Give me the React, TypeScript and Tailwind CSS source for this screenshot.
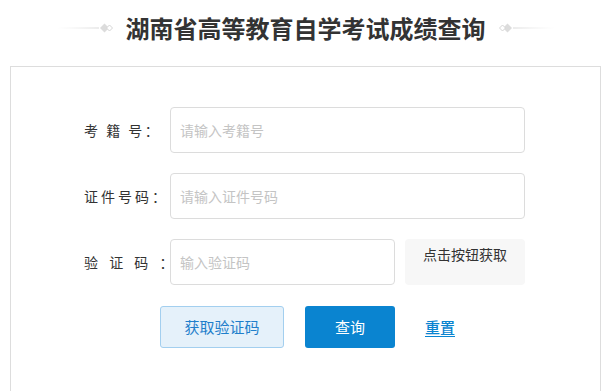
import React from "react";

const font = { fontFamily: '"Noto Sans CJK SC", "Noto Sans", "Liberation Sans", sans-serif' };

function Ornament({ flip }: { flip?: boolean }) {
  return (
    <svg width="56" height="14" viewBox="0 0 56 14" className={flip ? "-scale-x-100" : ""}>
      <defs>
        <linearGradient id={flip ? "lnR" : "lnL"} x1="0" x2="1" y1="0" y2="0">
          <stop offset="0" stopColor="#e4e4e4" stopOpacity="0" />
          <stop offset="1" stopColor="#d8d8d8" />
        </linearGradient>
      </defs>
      <rect x="0" y="6.5" width="42" height="1" fill={`url(#${flip ? "lnR" : "lnL"})`} />
      <polygon points="43,7 47.5,2.5 52,7 47.5,11.5" fill="#dcdcdc" />
      <polygon points="49.5,7 52.5,4 55.5,7 52.5,10" fill="#fff" stroke="#d4d4d4" strokeWidth="1" />
    </svg>
  );
}

function Field({ label, tracking, placeholder }: { label: string; tracking: string; placeholder: string }) {
  return (
    <div className="flex items-center">
      <label className={`w-[86px] shrink-0 whitespace-pre text-[14px] text-[#333] ${tracking}`}>{label}</label>
      <input
        placeholder={placeholder}
        className="h-[46px] w-[355px] rounded-[4px] border border-[#dcdcdc] bg-white px-[9px] text-[14px] text-[#333] outline-none placeholder:text-[#c4c4c4]"
      />
    </div>
  );
}

export default function App() {
  return (
    <div className="min-h-[391px] bg-white" style={font}>
      <div className="flex h-[44px] items-center justify-center gap-[13px] pt-[12px]">
        <Ornament />
        <h1 className="text-[24px] leading-[32px] font-bold text-[#333]">湖南省高等教育自学考试成绩查询</h1>
        <Ornament flip />
      </div>

      <div className="mx-[10px] mt-[22px] h-[340px] border border-[#dddddd] bg-white pt-[40px] pl-[73px]">
        <div className="flex flex-col gap-[20px]">
          <Field label="考 籍 号：" tracking="tracking-[2.5px]" placeholder="请输入考籍号" />
          <Field label="证件号码：" tracking="tracking-[3px]" placeholder="请输入证件号码" />
          <div className="flex items-center">
            <label className="w-[86px] shrink-0 whitespace-pre text-[14px] text-[#333] tracking-[4px]">验 证 码 ：</label>
            <input
              placeholder="输入验证码"
              className="h-[46px] w-[225px] rounded-[4px] border border-[#dcdcdc] bg-white px-[9px] text-[14px] text-[#333] outline-none placeholder:text-[#c4c4c4]"
            />
            <button className="ml-[10px] flex h-[46px] w-[120px] items-start justify-center rounded-[4px] bg-[#f7f7f7] pt-[5px] text-[14px] text-[#333]">
              点击按钮获取
            </button>
          </div>
        </div>

        <div className="mt-[21px] ml-[76px] flex items-center">
          <button className="h-[42px] w-[124px] rounded-[3px] border border-[#a3cfef] bg-[#e5f1fa] text-[15px] text-[#1f7fcb]">
            获取验证码
          </button>
          <button className="ml-[21px] h-[42px] w-[90px] rounded-[3px] bg-[#0a84d0] text-[15px] text-white">
            查询
          </button>
          <a href="#" className="ml-[30px] text-[15px] font-medium text-[#0a84d0] underline underline-offset-[3px]">
            重置
          </a>
        </div>
      </div>
    </div>
  );
}
